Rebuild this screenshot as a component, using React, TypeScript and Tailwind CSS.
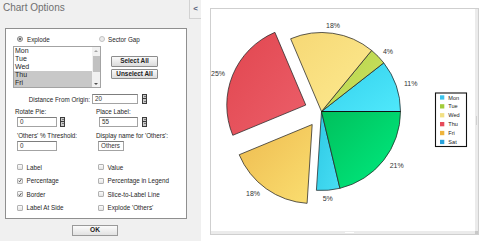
import React from 'react';

const txt = 'text-[6.3px] leading-[7px] text-[#262626] whitespace-nowrap';

const Radio = ({ checked }: { checked?: boolean }) => (
  <span
    className={`w-[6px] h-[6px] rounded-full border flex items-center justify-center shrink-0 ${
      checked ? 'border-[#8a8a8a] bg-[#d6d6d6]' : 'border-[#c2c2c2] bg-[#ebebeb]'
    }`}
  >
    {checked && <span className="w-[2.5px] h-[2.5px] rounded-full bg-[#4a4a4a]" />}
  </span>
);

const Checkbox = ({ checked }: { checked?: boolean }) => (
  <span className="w-[6px] h-[6px] rounded-[1px] border border-[#b2b2b2] bg-gradient-to-b from-[#fbfbfb] to-[#e4e4e4] flex items-center justify-center shrink-0">
    {checked && (
      <svg width="5" height="5" viewBox="0 0 10 10">
        <path d="M1.5 5.5 L4 8 L8.5 1.5" fill="none" stroke="#333" strokeWidth="2" />
      </svg>
    )}
  </span>
);

const Field = ({ value, w }: { value: string; w: string }) => (
  <div
    className={`${w} h-[10px] border border-[#a3a3a3] border-t-[#7d7d7d] bg-white pl-[2px] text-[6.3px] leading-[8px] text-[#333]`}
  >
    {value}
  </div>
);

const Spinner = ({ ml }: { ml: string }) => (
  <div className={`${ml} w-[5px] h-[10px] flex flex-col`}>
    <div className="h-[5px] border border-[#3c3c3c] bg-[#c9c9c9] flex items-center justify-center">
      <span className="w-0 h-0 border-l-[1px] border-r-[1px] border-b-[1px] border-l-transparent border-r-transparent border-b-[#222]" />
    </div>
    <div className="h-[5px] border border-[#3c3c3c] border-t-0 bg-[#c9c9c9] flex items-center justify-center">
      <span className="w-0 h-0 border-l-[1px] border-r-[1px] border-t-[1px] border-l-transparent border-r-transparent border-t-[#222]" />
    </div>
  </div>
);

const SmallButton = ({ label }: { label: string }) => (
  <div className="w-[47px] h-[10.5px] border border-[#8c8c8c] rounded-[1px] bg-gradient-to-b from-[#fafafa] to-[#dcdcdc] flex items-center justify-center text-[6.4px] font-bold text-[#222]">
    {label}
  </div>
);

// pie geometry (page coordinates)
const CX = 321.5;
const CY = 111.5;
const R = 79;
const rad = (a: number) => (a * Math.PI) / 180;

const slicePath = (a0: number, a1: number, off: number) => {
  const m = rad((a0 + a1) / 2);
  const cx = CX + off * Math.cos(m);
  const cy = CY - off * Math.sin(m);
  const x0 = cx + R * Math.cos(rad(a0));
  const y0 = cy - R * Math.sin(rad(a0));
  const x1 = cx + R * Math.cos(rad(a1));
  const y1 = cy - R * Math.sin(rad(a1));
  const large = a1 - a0 > 180 ? 1 : 0;
  return `M${cx.toFixed(2)},${cy.toFixed(2)} L${x0.toFixed(2)},${y0.toFixed(2)} A${R},${R} 0 ${large} 0 ${x1.toFixed(2)},${y1.toFixed(2)} Z`;
};

const slices = [
  { id: 'mon', a0: 0, a1: 38, off: 0, c0: '#33d0ec', c1: '#4fe8fb' },
  { id: 'tue', a0: 38, a1: 50.6, off: 0, c0: '#b4d246', c1: '#cfe466' },
  { id: 'wed', a0: 50.6, a1: 113, off: 0, c0: '#f6d875', c1: '#fdea90' },
  { id: 'thu', a0: 113, a1: 202.5, off: 17, c0: '#e1464f', c1: '#ec5f6a' },
  { id: 'fri', a0: 202.5, a1: 266.3, off: 16, c0: '#eebb50', c1: '#fade70' },
  { id: 'sat', a0: 266.3, a1: 283.5, off: 0, c0: '#2ec8e4', c1: '#47def4' },
  { id: 'sun', a0: 283.5, a1: 360, off: 0, c0: '#00c05c', c1: '#00ec80' },
];

const pieLabels = [
  { t: '18%', x: 333, y: 25.5 },
  { t: '4%', x: 388, y: 51.5 },
  { t: '11%', x: 410.7, y: 83.3 },
  { t: '25%', x: 218, y: 73 },
  { t: '21%', x: 396.7, y: 165.5 },
  { t: '18%', x: 253, y: 193.7 },
  { t: '5%', x: 327.7, y: 198 },
];

const legend = [
  { t: 'Mon', c: '#3cc4ec' },
  { t: 'Tue', c: '#a2cc3a' },
  { t: 'Wed', c: '#f2e084' },
  { t: 'Thu', c: '#e64a5a' },
  { t: 'Fri', c: '#efb43c' },
  { t: 'Sat', c: '#27a2dc' },
];

const PieChart = () => (
  <svg width="264" height="222" viewBox="211 9 264 222" className="block">
    <defs>
      {slices.map((s) => (
        <linearGradient key={s.id} id={`g-${s.id}`} x1="0" y1="0" x2="1" y2="1">
          <stop offset="0" stopColor={s.c0} />
          <stop offset="1" stopColor={s.c1} />
        </linearGradient>
      ))}
    </defs>
    {slices.map((s) => (
      <path
        key={s.id}
        d={slicePath(s.a0, s.a1, s.off)}
        fill={`url(#g-${s.id})`}
        stroke="#262626"
        strokeWidth="0.75"
        strokeLinejoin="round"
      />
    ))}
    <line x1={CX} y1={CY} x2={CX + R} y2={CY} stroke="#111" strokeWidth="1" />
    {pieLabels.map((l, i) => (
      <text
        key={i}
        x={l.x}
        y={l.y + 2.5}
        textAnchor="middle"
        fontSize="7"
        fill="#333"
        fontFamily="'Liberation Sans', Arial, sans-serif"
      >
        {l.t}
      </text>
    ))}
    <rect x="435.5" y="93" width="31" height="53.5" fill="#fff" stroke="#111" strokeWidth="1.1" />
    {legend.map((l, i) => {
      const cy = 97.5 + i * 8.9;
      return (
        <g key={l.t}>
          <rect x="440" y={cy - 2.2} width="4.3" height="4.3" fill={l.c} />
          <text
            x="448.3"
            y={cy + 2}
            fontSize="5.6"
            fill="#222"
            fontFamily="'Liberation Sans', Arial, sans-serif"
          >
            {l.t}
          </text>
        </g>
      );
    })}
  </svg>
);

const days = ['Mon', 'Tue', 'Wed', 'Thu', 'Fri'];

export default function App() {
  return (
    <div className="w-[481px] h-[241px] flex overflow-hidden bg-white font-['Liberation_Sans',Arial,sans-serif]">
      {/* options panel */}
      <div className="w-[201px] h-full bg-[#f0f0f0] flex flex-col">
        <div className="h-[28px] flex">
          <div className="flex-1 pl-[3px] pt-[1.5px] text-[10px] leading-[12px] text-[#6f6f6f]">Chart Options</div>
          <div className="w-[12px] h-[19px] border-l border-b border-[#d2d2d2] flex items-center justify-center text-[8px] font-bold text-[#56607a]">
            &lt;
          </div>
        </div>

        <div className="ml-[5px] w-[182px] h-[191px] bg-white border border-[#8f8f8f] flex flex-col">
          <div className="mt-[7px] h-[6px] pl-[11px] flex items-center">
            <div className="w-[82px] flex items-center gap-[4px]">
              <Radio checked />
              <span className={txt}>Explode</span>
            </div>
            <div className="flex items-center gap-[3px]">
              <Radio />
              <span className={txt}>Sector Gap</span>
            </div>
          </div>

          <div className="mt-[4px] pl-[7px] flex">
            <div className="w-[88px] h-[42px] border border-[#a3a3a3] flex">
              <div className="flex-1 flex flex-col">
                {days.map((d) => (
                  <div
                    key={d}
                    className={`h-[8px] pl-[1px] text-[7px] leading-[8px] text-[#1e1e1e] ${
                      d === 'Thu' || d === 'Fri' ? 'bg-[#c8c8c8]' : ''
                    }`}
                  >
                    {d}
                  </div>
                ))}
              </div>
              <div className="w-[8px] bg-[#f1f1f1] flex flex-col items-center">
                <div className="h-[7px] flex items-center justify-center">
                  <span className="w-0 h-0 border-l-[2px] border-r-[2px] border-b-[2px] border-l-transparent border-r-transparent border-b-[#a3a3a3]" />
                </div>
                <div className="mt-[2px] w-[7px] h-[16px] bg-[#c1c1c1]" />
                <div className="flex-1" />
                <div className="h-[7px] flex items-center justify-center">
                  <span className="w-0 h-0 border-l-[2px] border-r-[2px] border-t-[2px] border-l-transparent border-r-transparent border-t-[#505050]" />
                </div>
              </div>
            </div>
            <div className="ml-[10px] pt-[10px] flex flex-col gap-[2px]">
              <SmallButton label="Select All" />
              <SmallButton label="Unselect All" />
            </div>
          </div>

          <div className="mt-[6px] h-[10px] flex items-center">
            <span className={`${txt} w-[86px] text-right pr-[2px]`}>Distance From Origin:</span>
            <Field value="20" w="w-[46px]" />
            <Spinner ml="ml-[4px]" />
          </div>

          <div className="mt-[3.5px] grid grid-cols-[90px_1fr]">
            <span className={`${txt} pl-[9px]`}>Rotate Pie:</span>
            <span className={txt}>Place Label:</span>
          </div>
          <div className="mt-[2px] grid grid-cols-[90px_1fr]">
            <div className="pl-[11px] flex">
              <Field value="0" w="w-[40px]" />
              <Spinner ml="ml-[3px]" />
            </div>
            <div className="pl-[3px] flex">
              <Field value="55" w="w-[39px]" />
              <Spinner ml="ml-[4px]" />
            </div>
          </div>

          <div className="mt-[5.5px] grid grid-cols-[90px_1fr]">
            <span className={`${txt} pl-[11px]`}>'Others' % Threshold:</span>
            <span className={txt}>Display name for 'Others':</span>
          </div>
          <div className="mt-[1.5px] grid grid-cols-[90px_1fr]">
            <div className="pl-[11px] flex">
              <Field value="0" w="w-[40px]" />
            </div>
            <div className="pl-[2px] flex">
              <Field value="Others" w="w-[26px]" />
            </div>
          </div>

          <div className="mt-[13.5px] grid grid-cols-[90px_1fr] gap-y-[7.5px]">
            {[
              ['Label', false],
              ['Value', false],
              ['Percentage', true],
              ['Percentage in Legend', false],
              ['Border', true],
              ['Slice-to-Label Line', false],
              ['Label At Side', false],
              ["Explode 'Others'", false],
            ].map(([label, checked], i) => (
              <div
                key={label as string}
                className={`h-[6px] flex items-center gap-[3.5px] ${i % 2 === 0 ? 'pl-[11px]' : 'pl-[2px]'}`}
              >
                <Checkbox checked={checked as boolean} />
                <span className={txt}>{label as string}</span>
              </div>
            ))}
          </div>
        </div>

        <div className="mt-[5.5px] ml-[72px] w-[46px] h-[11px] border border-[#9a9a9a] bg-gradient-to-b from-[#fbfbfb] to-[#e2e2e2] flex items-center justify-center text-[6.6px] font-bold text-[#222]">
          OK
        </div>
      </div>

      {/* chart area */}
      <div className="flex-1 h-full bg-white pl-[9px] pt-[8px]">
        <div className="w-[269px] h-[227px] border border-[#cfcfcf] flex flex-col">
          <div className="flex-1 flex">
            <div className="flex-1">
              <PieChart />
            </div>
            <div className="w-[3px] bg-[#ebebeb] flex flex-col items-center justify-center">
              <div className="w-[1px] h-[9px] bg-[#d0d0d0]" />
            </div>
          </div>
          <div className="h-[3px] bg-[#ebebeb] flex items-center">
            <div className="ml-[134px] w-[9px] h-[1px] bg-white" />
            <div className="flex-1" />
            <div className="w-[3px] h-[3px] bg-[#c8c8c8]" />
          </div>
        </div>
      </div>
    </div>
  );
}
